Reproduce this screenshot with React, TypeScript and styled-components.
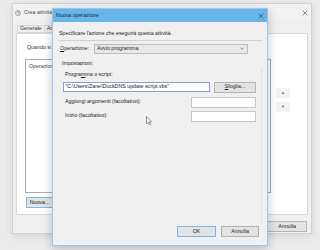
import React from "react";
import styled, { createGlobalStyle } from "styled-components";

const Global = createGlobalStyle`
  html, body { margin: 0; padding: 0; background: #ececec; }
  #root { width: 320px; height: 250px; }
`;

const Desktop = styled.div`
  position: relative;
  width: 320px;
  height: 250px;
  overflow: hidden;
  background: #ececec;
  font-family: "Liberation Sans", "Noto Sans", Arial, sans-serif;
  font-size: 5.3px;
  line-height: 1;
  color: #1c1c1c;
`;

const Window = styled.div<{ $left: number; $top: number; $w: number; $h: number; $active?: boolean }>`
  position: absolute;
  left: ${(p) => p.$left}px;
  top: ${(p) => p.$top}px;
  width: ${(p) => p.$w}px;
  height: ${(p) => p.$h}px;
  box-sizing: border-box;
  background: #f0f0f0;
  border: 1px solid ${(p) => (p.$active ? "#9cc7e8" : "#d2d2d2")};
  box-shadow: ${(p) =>
    p.$active ? "0 3px 10px rgba(0,0,0,0.22)" : "0 2px 8px rgba(0,0,0,0.10)"};
  display: flex;
  flex-direction: column;
`;

const TitleBar = styled.div<{ $active?: boolean; $h: number }>`
  height: ${(p) => p.$h}px;
  flex: none;
  display: flex;
  align-items: center;
  gap: 3px;
  padding: 0 3px 0 ${(p) => (p.$active ? 3 : 2)}px;
  background: ${(p) => (p.$active ? "#66b6ea" : "#f2f2f2")};
  color: ${(p) => (p.$active ? "#1b2a38" : "#4a4a4a")};
`;

const TitleText = styled.span`
  flex: 1;
  white-space: nowrap;
`;

const CloseX = styled.svg`
  width: 6px;
  height: 6px;
  flex: none;
`;

const Close = ({ color }: { color: string }) => (
  <CloseX viewBox="0 0 10 10">
    <path d="M1 1 L9 9 M9 1 L1 9" stroke={color} strokeWidth="1.1" fill="none" />
  </CloseX>
);

const AppIcon = () => (
  <svg width="6" height="6" viewBox="0 0 12 12">
    <circle cx="6" cy="6" r="5" fill="#e8e8e8" stroke="#777" strokeWidth="1.2" />
    <path d="M6 3 V6 H8.5" stroke="#555" strokeWidth="1.2" fill="none" />
  </svg>
);

/* ---------- back window ---------- */

const TabStrip = styled.div`
  display: flex;
  align-items: flex-end;
  margin: 2px 3px 0 4px;
  height: 10px;
  flex: none;
`;

const Tab = styled.div<{ $sel?: boolean }>`
  height: ${(p) => (p.$sel ? 10 : 8)}px;
  box-sizing: border-box;
  padding: 0 2px;
  display: flex;
  align-items: center;
  border: 1px solid #d6d6d6;
  border-bottom: ${(p) => (p.$sel ? "none" : "1px solid #d6d6d6")};
  margin-right: -1px;
  background: ${(p) => (p.$sel ? "#ffffff" : "#f0f0f0")};
  color: #333;
  white-space: nowrap;
`;

const TabPage = styled.div`
  margin: 0 3px;
  height: 182px;
  box-sizing: border-box;
  background: #ffffff;
  border: 1px solid #d9d9d9;
  padding: 11px 10px 5px 8px;
  display: flex;
  flex-direction: column;
  color: #333;
`;

const Para = styled.div`
  white-space: nowrap;
  margin-left: 2px;
`;

const ListRow = styled.div`
  display: flex;
  margin-top: 9px;
  gap: 5px;
`;

const ListBox = styled.div`
  width: 246px;
  height: 134px;
  box-sizing: border-box;
  border: 1px solid #ababab;
  background: #fff;
  padding: 4px 3px;
  color: #444;
`;

const ArrowCol = styled.div`
  display: flex;
  flex-direction: column;
  gap: 4px;
  margin-top: 29px;
`;

const SmallBtn = styled.div`
  width: 14px;
  height: 10px;
  display: flex;
  align-items: center;
  justify-content: center;
  background: #f2f2f2;
  color: #666;
  font-size: 4px;
`;

const BtnRow = styled.div`
  display: flex;
  gap: 4px;
  margin-top: 4px;
  margin-left: 1px;
`;

const Button = styled.div<{ $w: number; $def?: boolean }>`
  width: ${(p) => p.$w}px;
  height: 11px;
  flex: none;
  box-sizing: border-box;
  display: flex;
  align-items: center;
  justify-content: center;
  background: #e3e3e3;
  border: 1px solid ${(p) => (p.$def ? "#7fb6e6" : "#b4b4b4")};
  color: #222;
  white-space: nowrap;
`;

const BackFooter = styled.div`
  display: flex;
  justify-content: flex-end;
  gap: 4px;
  padding: 6px 4px 0 0;
`;

/* ---------- front dialog ---------- */

const DialogBody = styled.div`
  flex: 1;
  display: flex;
  flex-direction: column;
  padding: 9px 5px 8px 5px;
`;

const Instruction = styled.div`
  white-space: nowrap;
  margin-left: 1px;
  height: 6px;
`;

const Separator = styled.div`
  height: 1px;
  background: #d0d0d0;
  margin-top: 3px;
`;

const OpRow = styled.div`
  display: flex;
  align-items: center;
  margin-top: 2px;
  height: 11px;
`;

const Label = styled.span<{ $w?: number; $indent?: number }>`
  ${(p) => (p.$w ? `width: ${p.$w}px;` : "flex: 1;")}
  margin-left: ${(p) => p.$indent ?? 0}px;
  white-space: nowrap;
`;

const Combo = styled.div`
  width: 154px;
  height: 10px;
  box-sizing: border-box;
  display: flex;
  align-items: center;
  justify-content: space-between;
  padding: 0 3px 0 2px;
  background: #e8e8e8;
  border: 1px solid #bcbcbc;
`;

const Chevron = styled.svg`
  width: 4px;
  height: 3px;
`;

const Section = styled.div`
  margin: 7px 0 0 4px;
`;

const Panel = styled.div`
  margin-top: 2px;
  height: 150px;
  border-right: 1px solid #e0e0e0;
  padding: 4px 0 0 5px;
  display: flex;
  flex-direction: column;
`;

const Row = styled.div<{ $top: number; $right: number }>`
  display: flex;
  align-items: center;
  gap: 4px;
  margin-top: ${(p) => p.$top}px;
  padding-right: ${(p) => p.$right}px;
`;

const TextBox = styled.div<{ $w: number; $h: number; $focus?: boolean }>`
  width: ${(p) => p.$w}px;
  height: ${(p) => p.$h}px;
  flex: none;
  box-sizing: border-box;
  background: #fff;
  border: 1px solid ${(p) => (p.$focus ? "#8a9edb" : "#c6c6c6")};
  display: flex;
  align-items: center;
  padding: 0 1px;
  white-space: nowrap;
  overflow: hidden;
`;

const Footer = styled.div`
  display: flex;
  justify-content: flex-end;
  gap: 5px;
  margin-top: auto;
  padding-right: 3px;
`;

const Cursor = styled.svg`
  position: absolute;
  left: 146px;
  top: 116px;
  width: 6px;
  height: 10px;
`;

const U = styled.span`
  text-decoration: underline;
`;

export default function App() {
  return (
    <Desktop>
      <Global />
      <Window $left={12} $top={3} $w={300} $h={231}>
        <TitleBar $h={17}>
          <AppIcon />
          <TitleText>Crea attività</TitleText>
          <Close color="#555" />
        </TitleBar>
        <TabStrip>
          <Tab>Generale</Tab>
          <Tab>Attivazione</Tab>
          <Tab $sel>Azioni</Tab>
          <Tab>Condizioni</Tab>
          <Tab>Impostazioni</Tab>
        </TabStrip>
        <TabPage>
          <Para>Quando si</Para>
          <ListRow>
            <ListBox>Operazione</ListBox>
            <ArrowCol>
              <SmallBtn>▲</SmallBtn>
              <SmallBtn>▼</SmallBtn>
            </ArrowCol>
          </ListRow>
          <BtnRow>
            <Button $w={27} $def>
              Nuova...
            </Button>
            <Button $w={30}>Modifica...</Button>
            <Button $w={30}>Elimina</Button>
          </BtnRow>
        </TabPage>
        <BackFooter>
          <Button $w={40}>OK</Button>
          <Button $w={40}>Annulla</Button>
        </BackFooter>
      </Window>

      <Window $left={52} $top={8} $w={216} $h={238} $active>
        <TitleBar $h={13} $active>
          <TitleText>Nuova operazione</TitleText>
          <Close color="#2a3a48" />
        </TitleBar>
        <DialogBody>
          <Instruction>Specificare l'azione che eseguirà questa attività.</Instruction>
          <Separator />
          <OpRow>
            <Label $w={34} $indent={2}>
              <U>O</U>perazione:
            </Label>
            <Combo>
              <span>Avvio programma</span>
              <Chevron viewBox="0 0 8 5">
                <path d="M1 1 L4 4 L7 1" stroke="#444" strokeWidth="1.2" fill="none" />
              </Chevron>
            </Combo>
          </OpRow>
          <Section>Impostazioni:</Section>
          <Panel>
            <Label $w={120} $indent={2}>
              Progra<U>m</U>ma o script:
            </Label>
            <Row $top={4} $right={6}>
              <TextBox $w={147} $h={10} $focus>
                "C:\Users\Zane\DuckDNS update script.vbs"
              </TextBox>
              <Button $w={42}>
                <U>S</U>foglia...
              </Button>
            </Row>
            <Row $top={4} $right={5}>
              <Label $indent={2}>Aggiungi argomenti (facoltativo):</Label>
              <TextBox $w={65} $h={11} />
            </Row>
            <Row $top={3} $right={5}>
              <Label $indent={2}>Inizio (facoltativo):</Label>
              <TextBox $w={65} $h={11} />
            </Row>
          </Panel>
          <Footer>
            <Button $w={39} $def>
              OK
            </Button>
            <Button $w={38}>Annulla</Button>
          </Footer>
        </DialogBody>
      </Window>

      <Cursor viewBox="0 0 12 20">
        <path
          d="M1 1 L1 16 L4.5 12.5 L7 18 L9 17 L6.6 11.6 L11 11.6 Z"
          fill="#fff"
          stroke="#333"
          strokeWidth="1"
        />
      </Cursor>
    </Desktop>
  );
}
